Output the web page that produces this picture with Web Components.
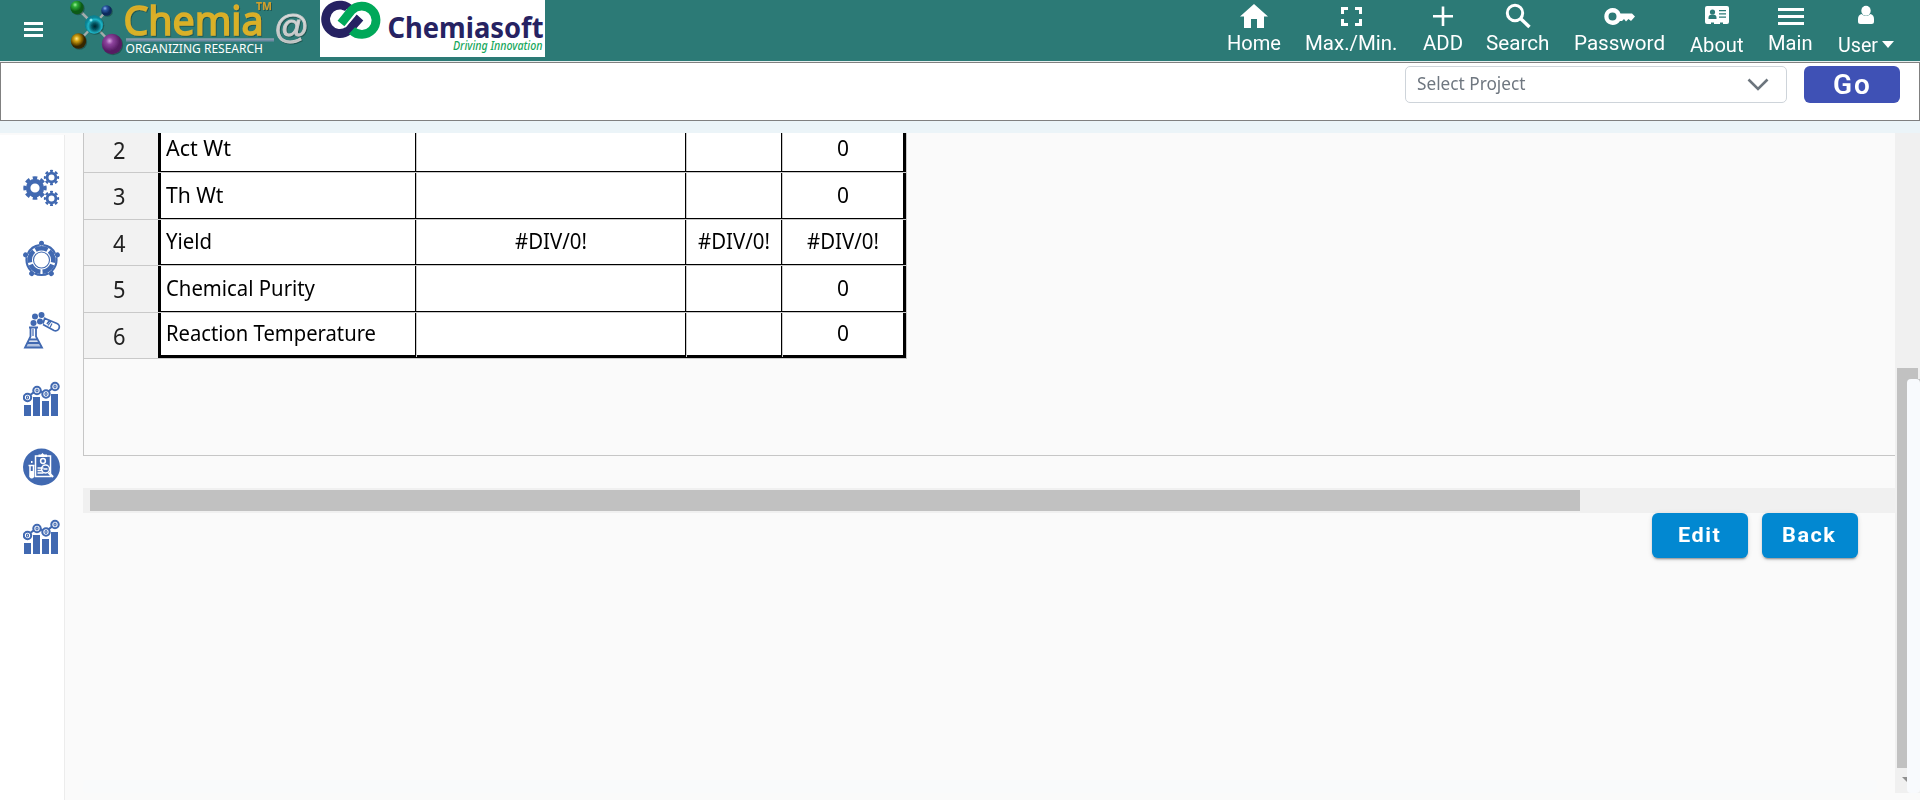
<!DOCTYPE html>
<html lang="en"><head><meta charset="utf-8"><title>Chemia</title>
<style>html,body{margin:0;height:100%;overflow:hidden;background:#fafafa}body{font-family:Roboto,sans-serif}</style></head>
<body>
<chemia-app></chemia-app>
<script>
const define=(name,html,init)=>customElements.define(name,class extends HTMLElement{
  connectedCallback(){
    if(this.shadowRoot)return;
    this.attachShadow({mode:'open'}).innerHTML=html;
    if(init)init.call(this,this.shadowRoot);
  }
});

/* Text stretched to an exact advance width */
define('fit-text',`<style>:host{display:inline-block;white-space:nowrap;text-align:left}span{display:inline-block;transform-origin:0 50%}</style><span><slot></slot></span>`,function(r){
  const w=+this.getAttribute('w'),s=r.querySelector('span');
  const n=s.getBoundingClientRect().width;
  this.style.width=w+'px';
  if(n)s.style.transform='scaleX('+(w/n)+')';
});

define('nav-item',`<style>:host{display:flex;flex-direction:column;align-items:center;color:#fff;font:20px/24px Roboto,sans-serif;height:61px}
.i{height:31px;display:flex;width:100%;justify-content:center}.t{display:flex;align-items:center;height:24px;margin-top:var(--drop,0px)}</style>
<div class="i"><slot name="icon"></slot></div><div class="t"><slot></slot></div>`);

define('chemia-logo',`<style>:host{display:block;width:250px;height:61px}svg{display:block;overflow:visible}</style>
<svg width="250" height="61" viewBox="65 0 250 61"><defs>
<radialGradient id="g" cx=".36" cy=".3"><stop offset="0" stop-color="#9df29a"/><stop offset=".35" stop-color="#2fae38"/><stop offset="1" stop-color="#0a5a14"/></radialGradient>
<radialGradient id="b" cx=".36" cy=".3"><stop offset="0" stop-color="#8db4ee"/><stop offset=".4" stop-color="#2a57a2"/><stop offset="1" stop-color="#0d2a5c"/></radialGradient>
<radialGradient id="c" cx=".55" cy=".6"><stop offset="0" stop-color="#02242c"/><stop offset=".4" stop-color="#075f6d"/><stop offset=".75" stop-color="#1fb4c6"/><stop offset="1" stop-color="#078293"/></radialGradient>
<radialGradient id="y" cx=".38" cy=".35"><stop offset="0" stop-color="#ffe98a"/><stop offset=".35" stop-color="#cfa010"/><stop offset=".8" stop-color="#6a4c00"/><stop offset="1" stop-color="#352500"/></radialGradient>
<radialGradient id="p" cx=".38" cy=".35"><stop offset="0" stop-color="#d9a5e2"/><stop offset=".35" stop-color="#8e449e"/><stop offset="1" stop-color="#551c62"/></radialGradient>
<linearGradient id="au" x1="0" y1="0" x2="0" y2="1"><stop offset="0" stop-color="#d99a28"/><stop offset=".5" stop-color="#dbb125"/><stop offset="1" stop-color="#d5b52c"/></linearGradient>
<linearGradient id="ag" x1="0" y1="0" x2="0" y2="1"><stop offset="0" stop-color="#e8e8e8"/><stop offset="1" stop-color="#b9bcbc"/></linearGradient>
<filter id="s" x="-20%" y="-20%" width="140%" height="140%"><feDropShadow dx="1" dy="1" stdDeviation=".7" flood-color="#103b38" flood-opacity=".55"/></filter></defs>
<path d="M77 8 94 25 107 10M94 25 79 41M94 25 112 44" fill="none" stroke="#a3adac" stroke-width="2.500"/>
<g filter="url(#s)"><circle cx="77" cy="7.500" r="6.700" fill="url(#g)"/><circle cx="106.500" cy="10.500" r="5.300" fill="url(#b)"/><circle cx="78.500" cy="41" r="7.700" fill="url(#y)"/><circle cx="94" cy="24.500" r="9.200" fill="url(#c)"/><circle cx="112" cy="44" r="10.200" fill="url(#p)"/>
<circle cx="91" cy="20" r="1.500" fill="#9ef4fa" opacity=".8"/></g>
<g filter="url(#s)" font-family="'Noto Sans',sans-serif"><text x="123.500" y="34.500" font-size="40.500" fill="url(#au)" stroke="#d9b02a" stroke-width="1.600" textLength="140" lengthAdjust="spacingAndGlyphs">Chemia</text>
<text x="256" y="9.500" font-size="10" font-weight="700" fill="#cfa02c" textLength="16" lengthAdjust="spacingAndGlyphs">TM</text>
<text x="274" y="37.500" font-size="33" font-family="'Liberation Sans',sans-serif" fill="url(#ag)" stroke="#c9cccc" stroke-width=".9" textLength="35" lengthAdjust="spacingAndGlyphs">@</text></g>
<path d="M126 38.500H274v3H126z" fill="#6f8ba4"/><path d="M126 38.500H274v1H126z" fill="#96a7b4"/>
<text x="125.500" y="53" font-size="13.300" fill="#fff" font-family="'Noto Sans',sans-serif" textLength="137.500" lengthAdjust="spacingAndGlyphs">ORGANIZING RESEARCH</text></svg>`);

define('chemiasoft-logo',`<style>:host{display:block;width:225px;height:57px;background:#fff}svg{display:block}</style>
<svg width="225" height="57" viewBox="320 0 225 57"><g fill="none" stroke-width="8.800">
<path d="M351 10.500A14.200 14.200 0 1 0 348.500 30.500L360 17.500" stroke="#262262"/>
<path d="M341.500 24 351 12.500" stroke="#fff" stroke-width="11"/><path d="M341 23.500 351.500 10.500A14.200 14.200 0 1 1 352 30.500" stroke="#00a859"/></g>
<g font-family="'Noto Sans',sans-serif"><text x="387.500" y="38" font-size="28.500" font-weight="700" fill="#262262" textLength="156" lengthAdjust="spacingAndGlyphs">Chemiasoft</text>
<text x="453" y="49.500" font-size="12" font-style="italic" font-weight="500" fill="#16a75c" textLength="89.500" lengthAdjust="spacingAndGlyphs">Driving Innovation</text></g></svg>`);

define('app-header',`<style>:host{display:flex;background:#2c7a76;border-bottom:1px solid #e6efef;box-sizing:border-box;height:62px}
.m{width:65px;box-sizing:border-box;padding:22px 0 0 24px}.gap{width:5px}.n{margin-left:auto;display:flex;gap:24.700px;padding-right:26px}svg{display:block;fill:#fff}</style>
<div class="m"><svg width="19" height="16"><path d="M0 0h19v3H0zM0 6h19v3H0zM0 12h19v3H0z"/></svg></div>
<chemia-logo></chemia-logo><div class="gap"></div><chemiasoft-logo></chemiasoft-logo>
<div class="n">
<nav-item><svg slot="icon" width="28" height="31"><path d="M14 4 28 16.500H24V28H17V19H11V28H4V16.500H0z"/></svg><fit-text w="54">Home</fit-text></nav-item>
<nav-item><svg slot="icon" width="21" height="31"><path d="M0 7h7v3H3v4H0zM14 7h7v7h-3v-4h-4zM0 19h3v4h4v3H0zM18 19h3v7h-7v-3h4z"/></svg><fit-text w="92.500">Max./Min.</fit-text></nav-item>
<nav-item style="margin-right:-1px"><svg slot="icon" width="20" height="31"><path d="M8.700 6.500h2.600V15H20v2.600h-8.700V26H8.700v-8.400H0V15h8.700z"/></svg><fit-text w="40">ADD</fit-text></nav-item>
<nav-item><svg slot="icon" width="26" height="31"><circle cx="10" cy="13" r="7.700" style="fill:none" stroke="#fff" stroke-width="3"/><path d="M15.500 18.500 24.500 27" stroke="#fff" stroke-width="3.500"/></svg><fit-text w="63.500">Search</fit-text></nav-item>
<nav-item><svg slot="icon" width="31" height="31"><path fill-rule="evenodd" d="M8.500 8a8.500 8.500 0 0 1 8 5.500H28l3 3-4 4.500-2.500-2-2.500 2.500-2-2.500-2 2h-2A8.500 8.500 0 1 1 8.500 8zM8.500 12.500a4 4 0 1 0 0 8 4 4 0 0 0 0-8z"/></svg><fit-text w="91">Password</fit-text></nav-item>
<nav-item style="--drop:2px"><svg slot="icon" width="24" height="31"><path d="M2 6h20q2 0 2 2v14q0 2-2 2h-4v-1.500h-3V24H9v-1.500H6V24H2q-2 0-2-2V8q0-2 2-2z"/><g fill="#2c7a76"><circle cx="7.500" cy="12" r="2.600"/><path d="M3.500 19v-1.500q0-3 4-3t4 3V19zM14 10h7v1.200h-7zM14 13.300h7v1.200h-7zM14 16.600h7v1.200h-7z"/></g></svg><fit-text w="53.500">About</fit-text></nav-item>
<nav-item><svg slot="icon" width="26" height="31"><path d="M0 8h26v3H0zM0 15h26v3H0zM0 22h26v3H0z"/></svg><fit-text w="44.500">Main</fit-text></nav-item>
<nav-item style="--drop:2px"><svg slot="icon" width="16" height="31"><ellipse cx="8" cy="10.700" rx="4.700" ry="5"/><path d="M3.500 14Q0 15 0 19v2.500Q0 24 2.500 24h11Q16 24 16 21.500V19q0-4-3.500-5-4.500 4-9 0z"/></svg><fit-text w="40">User</fit-text><svg width="12" height="8" style="margin-left:4.500px"><path d="M0 0h12L6 7z"/></svg></nav-item>
</div>`);

define('project-bar',`<style>:host{display:flex;justify-content:flex-end;box-sizing:border-box;height:59px;background:#fff;border:1px solid #808080;padding:3px 19px 0 0;gap:17px}
.s{display:flex;align-items:center;justify-content:space-between;box-sizing:border-box;width:382px;height:37px;border:1px solid #ced4da;border-radius:5px;padding:0 17px 0 11px;font:17.300px/24px "Noto Sans",sans-serif;color:#6f7780}.s fit-text{margin-top:-2px}
.g{width:96px;height:37px;border-radius:6px;background:#3f51b5;color:#fff;font:600 27px/39px Roboto,sans-serif;letter-spacing:2px;text-align:center}</style>
<div class="s"><fit-text w="108.500">Select Project</fit-text><svg width="22" height="13"><path d="M1.500 1.500 11 11 20.500 1.500" fill="none" stroke="#6c757d" stroke-width="2.600"/></svg></div>
<div class="g"><fit-text w="39">Go</fit-text></div>`);

const blue='#4169b1';
const icons={
gears:()=>{const gear=(x,y,r,t,tr,tw)=>`<circle cx="${x}" cy="${y}" r="${r}" fill="none" stroke="${blue}" stroke-width="${t}"/><circle cx="${x}" cy="${y}" r="${tr}" fill="none" stroke="${blue}" stroke-width="${tw}" pathLength="16" stroke-dasharray="1.150 .850" stroke-dashoffset=".575"/>`;
return gear(12,20,6.900,4.600,10.200,3)+gear(28.500,9.500,4.400,2.800,6.500,2.300)+gear(28.500,30.500,4.400,2.800,6.500,2.300)},
team:()=>{let o=`<g fill="none" stroke="${blue}"><circle cx="18.500" cy="20" r="15" stroke-width="2.200" pathLength="20" stroke-dasharray="3.200 .8" stroke-dashoffset="-.4" transform="rotate(-90 18.500 20)"/><circle cx="18.500" cy="20" r="11.800" stroke-width="4.600" pathLength="20" stroke-dasharray="3.400 .6" stroke-dashoffset="1.700" transform="rotate(-90 18.500 20)"/><circle cx="18.500" cy="20" r="8" stroke-width="1.100"/></g>`;
for(let i=0;i<5;i++)o+=`<circle cx="18.500" cy="3.300" r="2.500" fill="${blue}" transform="rotate(${i*72} 18.500 20)"/>`;return o},
flask:()=>`<g fill="#4169b1"><circle cx="12" cy="4.500" r="3"/><circle cx="18.500" cy="3" r="3"/><circle cx="10.500" cy="11" r="3"/><circle cx="17" cy="9.500" r="3"/></g><g fill="none" stroke="#4169b1" stroke-width="1.800"><path d="M6 15.500h9M7.500 16v8.500L2 35.500h17L13 24.500V16M4 31h13M6 27.500h9M22 5.500 20 11.500M22 6.500l12 5a3.700 3.700 0 0 1-3 7l-11-6M24 12l3-4"/><path d="M25 13.500l3-4M29 11.500l-2 4M10 17v7" stroke-width="1.200"/></g><path d="M4.500 29.500h11.500l3 6H2z" fill="#4169b1" opacity=".4"/>`,
chart:()=>`<path d="M1 25h7v11H1zM10 17h7v19h-7zM19 21h7v15h-7zM28 14h7v22h-7z" fill="#4169b1"/><g fill="#fff" stroke="#4169b1" stroke-width="2.100"><path d="M4.500 17 14 10l9 3.500 9-7.500"/><circle cx="4.500" cy="17.500" r="3.700"/><circle cx="14" cy="10.500" r="3.700"/><circle cx="23" cy="14" r="3.700"/><circle cx="32" cy="6.500" r="3.700"/></g><g fill="none" stroke="#4169b1" stroke-width="1.200"><ellipse cx="4.500" cy="17.500" rx="1" ry="1.500"/><ellipse cx="14" cy="10.500" rx="1" ry="1.500"/><ellipse cx="23" cy="14" rx="1" ry="1.500"/><ellipse cx="32" cy="6.500" rx="1" ry="1.500"/></g>`,
report:()=>`<circle cx="18.500" cy="19" r="18.500" fill="#4169b1"/><g fill="none" stroke="#fff" stroke-width="1.500"><path d="M12.500 8h15v20.500h-15zM14.500 20h6M14.500 22.500h5M14.500 25h6"/><circle cx="22.500" cy="21" r="4"/><path d="M25.500 24.500l4.500 4.500" stroke-width="2.300"/><circle cx="20" cy="13" r="2.400"/><path d="M5.500 17.500h6M7 18v10.500q1.800 2.500 3.500 0V18M20.500 21h4"/></g><path d="M15.500 6.500h2.500l1.500-1.500 1.500 1.500h3V9h-8.500zM7 23h3.500v6H7zM8 13h1.500v2H8z" fill="#fff"/>`};
define('side-icon',`<style>:host{display:block;width:38px;height:38px}svg{display:block}</style><svg width="38" height="38"></svg>`,function(r){r.querySelector('svg').innerHTML=icons[this.getAttribute('name')]()});
define('side-bar',`<style>:host{display:block;box-sizing:border-box;width:65px;height:665px;margin-top:2px;background:#fff;border-right:1px solid #ececec;padding:33px 0 0 23px}
side-icon{margin-bottom:34px}</style>
<side-icon name="gears"></side-icon><side-icon name="team"></side-icon><side-icon name="flask" style="margin-bottom:30px"></side-icon><side-icon name="chart" style="margin-bottom:30px"></side-icon><side-icon name="report" style="margin-bottom:32px"></side-icon><side-icon name="chart"></side-icon>`);

define('result-sheet',`<style>:host{display:block;box-sizing:border-box;height:323px;border:1px solid #c6c6c6;border-top:0;border-right:0;overflow:hidden}
.r{display:grid;grid-template-columns:74px 259px 270px 96px 124px;height:var(--h);width:823px;background:linear-gradient(#000,#000) 74px calc(100% - 1px)/748px 1px no-repeat #c9c9c9}
.r>*{box-sizing:border-box;border-bottom:1px solid #000;border-right:1px solid #000;background:#fff;display:flex;justify-content:center;align-items:flex-start;font:21.300px/24px "Noto Sans",sans-serif;color:#000;margin:0 1px 1px 0;padding-top:var(--p,0px)}
.r>.n{background:#f2f2f2;margin-right:0;border:0;font-size:23px;color:#222;padding:var(--q,1px) 3px 0 0}
.r>.l{border-left:3px solid #000;justify-content:flex-start;padding-left:5px}
.r>:last-child{border-right-width:3px}
.z>*:not(.n){border-bottom-width:3px}
.r{background-position:74px calc(100% - 1px)}</style>
<div id="t"></div>`,function(r){
 const d='<fit-text w="72" style="margin-right:1px">#DIV/0!</fit-text>',z='<fit-text w="12">0</fit-text>';
 const rows=[['2','Act Wt',65,40,3,5],['3','Th Wt',57.5,47,10,11],['4','Yield',46,46,9,10.5],['5','Chemical Purity',149,47,10,11],['6','Reaction Temperature',210,46,8,10.5]];
 r.getElementById('t').innerHTML=rows.map(([n,l,w,h,p,q],i)=>`<div class="r${i==4?' z':''}" style="--h:${h}px;--q:${q}px;--p:${p}px"><div class="n"><fit-text w="12.500">${n}</fit-text></div><div class="l"><fit-text w="${w}">${l}</fit-text></div><div>${i==2?d:''}</div><div>${i==2?d:''}</div><div>${i==2?d:z}</div></div>`).join('')});

define('action-button',`<style>:host{display:block;box-sizing:border-box;padding-right:1px;width:96px;height:45px;background:#0288d1;border-radius:6px;color:#fff;text-align:center;font:700 21px/45px Roboto,sans-serif;letter-spacing:1.500px;box-shadow:0 3px 1px -2px rgba(0,0,0,.2),0 2px 2px rgba(0,0,0,.14),0 1px 5px rgba(0,0,0,.12)}</style><slot></slot>`);

define('page-scroll',`<style>:host{display:flex;flex-direction:column;width:25px;height:660px;background:#f0f0f0}
.t{margin:235px 2px 0;height:11px;background:#c1c1c1}.b{display:grid;grid-template-columns:10px 13px;margin-left:2px;height:414px}.h{height:389px;background:#c1c1c1}.w{background:#f8fafd;border-radius:4px;height:414px}svg{display:block;margin:9px 0 0 5px}.k{background:linear-gradient(#c1c1c1 5px,#f0f0f0 5px)}</style>
<div class="t"></div><div class="b"><div><div class="h"></div><svg width="5" height="5"><path d="M0 0h5v5z" fill="#8f8f8f"/></svg></div><div class="k"><div class="w"></div></div></div>`);

define('chemia-app',`<style>:host{display:block;width:1920px;height:800px;background:#fafafa}
.band{height:12px;background:#ebf4f8}.body{display:flex;height:667px}main{width:1812px;margin-left:18px}
.h{box-sizing:border-box;margin-top:32px;height:25px;background:#f0f0f0;padding:2px 7px}.h div{width:1490px;height:21px;background:#c1c1c1}
.a{display:flex;justify-content:flex-end;gap:14px;padding-right:37px}.f{width:1794px;height:13px;margin-top:222px;background:#f9fafb;border-radius:3px}</style>
<app-header></app-header><project-bar></project-bar><div class="band"></div>
<div class="body"><side-bar></side-bar><main><result-sheet></result-sheet><div class="h"><div></div></div>
<div class="a"><action-button><fit-text w="43.500">Edit</fit-text></action-button><action-button><fit-text w="54.500">Back</fit-text></action-button></div><div class="f"></div></main><page-scroll></page-scroll></div>`);
</script>
</body></html>
